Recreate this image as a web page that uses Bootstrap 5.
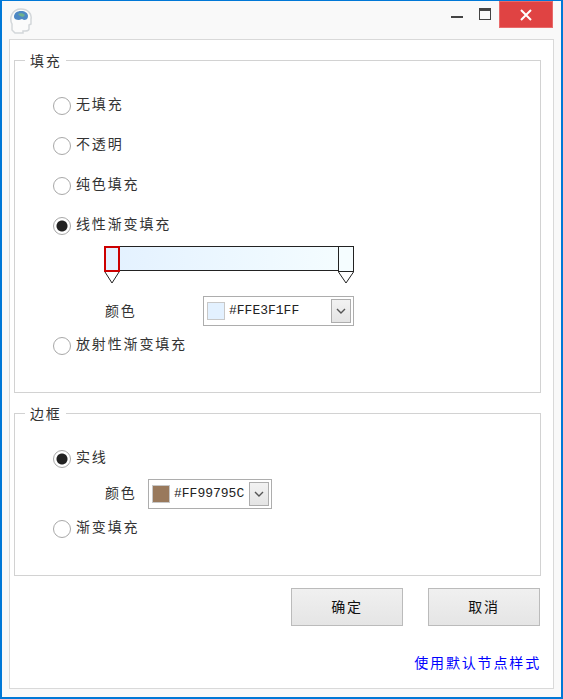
<!DOCTYPE html>
<html lang="zh-CN">
<head>
    <meta charset="UTF-8">
    <meta name="viewport" content="width=device-width, initial-scale=1.0">
    <title>节点样式</title>
    <link href="https://cdn.jsdelivr.net/npm/bootstrap@5.3.0/dist/css/bootstrap.min.css" rel="stylesheet">
    <style>
        html, body { height: 100%; overflow: hidden; }
        body { font-family: "Noto Sans CJK SC", "Liberation Sans", sans-serif; font-size: 14px; color: #333; background: #f9f9f9; }
        .app-window { width: 563px; height: 699px; border: solid #0078d7; border-width: 1px 2px 2px 2px; background: #f9f9f9; }
        .title-bar { height: 38px; padding-left: 8px; }
        .win-icon { margin-top: 7px; }
        .win-btns { height: 27px; margin-right: 8px; }
        .win-min { width: 12px; height: 2px; background: #444; margin: 15px 16px 0 0; }
        .win-max { width: 12px; height: 12px; border: 1px solid #444; border-top-width: 3px; margin: 7px 8px 0 0; }
        .win-close { width: 54px; height: 27px; background: #e04343; border: 1px solid #e86a6a; display: flex; align-items: center; justify-content: center; }
        .main-panel { margin-left: 7px; width: 545px; height: 650px; background: #fff; border: 1px solid #d9d9d9; padding: 10px 12px 0 4px; }
        .group-box { border: 1px solid #d2d2d2; padding: 14px 0 30px 38px; margin-bottom: 10px; }
        .group-box.second { padding-bottom: 28px; margin-bottom: 12px; }
        .group-box legend { float: none; width: auto; margin: 0 0 0 -28px; padding: 0 4px 1px 5px; font-size: 14px; line-height: 20px; letter-spacing: 1.85px; color: #333; }
        .cn-text { letter-spacing: 1.85px; line-height: 21px; }
        .radio-row { height: 40px; padding: 0; margin: 0; min-height: 0; gap: 5px; }
        .radio-row.short { height: 34px; }
        .radio-row.tall { height: 38px; }
        .radio-row .form-check-input { float: none; margin: 1px 0 0 0; width: 18px; height: 18px; border: 1px solid #a8a8a8; box-shadow: none; background-color: #fff; }
        .radio-row .form-check-input:checked { background-color: #fff; border-color: #a8a8a8; background-image: radial-gradient(circle, #222 0, #222 5px, transparent 6px); }
        .radio-row .form-check-label { opacity: 1; margin-bottom: 3px; }
        .grad-editor { margin-left: 51px; padding-top: 1px; margin-bottom: 2px; }
        .grad-bar { width: 250px; height: 25px; border: 1px solid #222; background: linear-gradient(to right, #e3f1ff, #f5fdff); }
        .grad-stops { position: absolute; left: 0; top: 0; }
        .color-row { height: 30px; }
        .color-row.first { margin-top: 25px; margin-left: 1px; }
        .color-row.second { margin: 1px 0 0 52px; }
        .color-label { width: 98px; margin-bottom: 2px; }
        .color-row.second .color-label { width: 43px; margin-bottom: 3px; }
        .color-pick { border: 1px solid #adadad; height: 30px; padding: 0 2px 0 3px; background: #fff; }
        .color-pick.wide { width: 151px; }
        .color-pick.narrow { width: 124px; }
        .swatch { width: 18px; height: 18px; border: 1px solid #c8c8c8; }
        .swatch.light { background: #e3f1ff; }
        .swatch.brown { background: #99795c; }
        .hex-text { font-family: "Liberation Mono", monospace; font-size: 13px; color: #222; margin-left: 4px; }
        .drop-btn { width: 20px; height: 24px; border: 1px solid #adadad; background: linear-gradient(#f2f2f2, #e4e4e4); }
        .dlg-btn.btn { width: 112px; height: 38px; padding: 0 0 2px 0; font-size: 14px; letter-spacing: 1.85px; color: #111; background: linear-gradient(#f0f0f0, #e5e5e5); border: 1px solid #bbb; border-radius: 0; }
        .btn-gap { gap: 25px; margin-right: 1px; }
        .default-link { color: #0000ff; text-decoration: none; letter-spacing: 1.85px; line-height: 21px; margin-top: 26px; margin-right: 0; }
    </style>
</head>
<body>
    <div class="app-window">
        <!-- title bar -->
        <div class="title-bar d-flex justify-content-between align-items-start">
            <svg class="win-icon" width="23" height="26" viewBox="0 0 23 26">
                <path d="M2 22V16C-1 10 2 1 11 1c7 0 11 5 10 10l0 5-2 1v4c0 2-2 2-6 2v2H5z" fill="#fbfbfb" stroke="#d3d7da" stroke-width="1.5"/>
                <path d="M4 9c0-4 3-6 7-6s7 2 7 5c0 3-2 4-4 4l-2-1-3 1c-3 0-5-1-5-3z" fill="#4d88c4"/>
                <path d="M8 6c2-1 5-1 7 1l-2 2-3-1z" fill="#6fb08c"/>
            </svg>
            <div class="win-btns d-flex align-items-start">
                <div class="win-min"></div>
                <div class="win-max"></div>
                <div class="win-close">
                    <svg width="12" height="12" viewBox="0 0 12 12"><path d="M1 1l10 10M11 1L1 11" stroke="#fff" stroke-width="2"/></svg>
                </div>
            </div>
        </div>

        <div class="main-panel">
            <!-- 填充 -->
            <fieldset class="group-box">
                <legend>填充</legend>
                <div class="form-check radio-row d-flex align-items-center">
                    <input class="form-check-input" type="radio" name="fill" id="fillNone">
                    <label class="form-check-label cn-text" for="fillNone">无填充</label>
                </div>
                <div class="form-check radio-row d-flex align-items-center">
                    <input class="form-check-input" type="radio" name="fill" id="fillOpaque">
                    <label class="form-check-label cn-text" for="fillOpaque">不透明</label>
                </div>
                <div class="form-check radio-row d-flex align-items-center">
                    <input class="form-check-input" type="radio" name="fill" id="fillSolid">
                    <label class="form-check-label cn-text" for="fillSolid">纯色填充</label>
                </div>
                <div class="form-check radio-row d-flex align-items-center">
                    <input class="form-check-input" type="radio" name="fill" id="fillLinear" checked>
                    <label class="form-check-label cn-text" for="fillLinear">线性渐变填充</label>
                </div>
                <div class="grad-editor">
                    <div class="position-relative">
                        <div class="grad-bar"></div>
                        <svg class="grad-stops" width="250" height="38" viewBox="0 0 250 38">
                            <rect x="1" y="1" width="14" height="24" fill="#e3f1ff" stroke="#c00" stroke-width="2"/>
                            <path d="M1 26L8 37L15 26" fill="#fff" stroke="#222"/>
                            <rect x="234.5" y="0.5" width="15" height="25" fill="#f5fdff" stroke="#222"/>
                            <path d="M234.5 26L242 37L249.5 26" fill="#fff" stroke="#222"/>
                        </svg>
                    </div>
                    <div class="color-row first d-flex align-items-center">
                        <div class="color-label cn-text">颜色</div>
                        <div class="color-pick wide d-flex align-items-center">
                            <div class="swatch light"></div>
                            <span class="hex-text flex-grow-1">#FFE3F1FF</span>
                            <div class="drop-btn d-flex align-items-center justify-content-center">
                                <svg width="10" height="6" viewBox="0 0 10 6"><path d="M1 1l4 4 4-4" fill="none" stroke="#555" stroke-width="1.4"/></svg>
                            </div>
                        </div>
                    </div>
                </div>
                <div class="form-check radio-row short d-flex align-items-center">
                    <input class="form-check-input" type="radio" name="fill" id="fillRadial">
                    <label class="form-check-label cn-text" for="fillRadial">放射性渐变填充</label>
                </div>
            </fieldset>

            <!-- 边框 -->
            <fieldset class="group-box second">
                <legend>边框</legend>
                <div class="form-check radio-row d-flex align-items-center">
                    <input class="form-check-input" type="radio" name="line" id="lineSolid" checked>
                    <label class="form-check-label cn-text" for="lineSolid">实线</label>
                </div>
                <div class="color-row second d-flex align-items-center">
                    <div class="color-label cn-text">颜色</div>
                    <div class="color-pick narrow d-flex align-items-center">
                        <div class="swatch brown"></div>
                        <span class="hex-text flex-grow-1">#FF99795C</span>
                        <div class="drop-btn d-flex align-items-center justify-content-center">
                            <svg width="10" height="6" viewBox="0 0 10 6"><path d="M1 1l4 4 4-4" fill="none" stroke="#555" stroke-width="1.4"/></svg>
                        </div>
                    </div>
                </div>
                <div class="form-check radio-row tall d-flex align-items-center">
                    <input class="form-check-input" type="radio" name="line" id="lineGrad">
                    <label class="form-check-label cn-text" for="lineGrad">渐变填充</label>
                </div>
            </fieldset>

            <div class="d-flex justify-content-end btn-gap">
                <button type="button" class="btn dlg-btn">确定</button>
                <button type="button" class="btn dlg-btn">取消</button>
            </div>
            <div class="d-flex justify-content-end">
                <a href="#" class="default-link">使用默认节点样式</a>
            </div>
        </div>
    </div>
    <script src="https://cdn.jsdelivr.net/npm/bootstrap@5.3.0/dist/js/bootstrap.bundle.min.js"></script>
</body>
</html>
